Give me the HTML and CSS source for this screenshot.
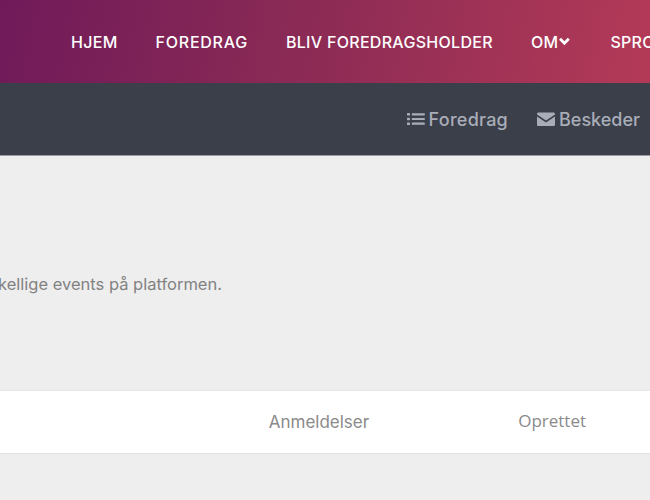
FILE: index.html
```html
<!DOCTYPE html>
<html lang="da">
<head>
<meta charset="utf-8">
<title>Foredrag</title>
<link rel="stylesheet" href="styles.css">
</head>
<body>
<header class="topnav">
  <a class="topnav-link" href="#">HJEM</a>
  <a class="topnav-link topnav-wide" href="#">FOREDRAG</a>
  <a class="topnav-link" href="#">BLIV FOREDRAGSHOLDER</a>
  <a class="topnav-link topnav-om" href="#">OM<svg class="chevron" viewBox="0 0 14 9" width="14" height="9"><path d="M2 1.800 6.400 6.200l4.400-4.400" fill="none" stroke="currentColor" stroke-width="2.800"/></svg></a>
  <a class="topnav-link" href="#">SPROG</a>
</header>
<nav class="subnav">
  <a class="subnav-link subnav-wide" href="#"><svg class="icon" viewBox="0 0 18 14" width="18" height="14"><g fill="currentColor"><rect x="0" y="1" width="3" height="2.600" rx=".6"/><rect x="0" y="5.700" width="3" height="2.600" rx=".6"/><rect x="0" y="10.400" width="3" height="2.600" rx=".6"/><rect x="4.800" y="1.200" width="13" height="2.200" rx=".5"/><rect x="4.800" y="5.900" width="13" height="2.200" rx=".5"/><rect x="4.800" y="10.600" width="13" height="2.200" rx=".5"/></g></svg>Foredrag</a>
  <a class="subnav-link" href="#"><svg class="icon" viewBox="0 0 18 14" width="18" height="14"><path fill="currentColor" d="M1.600.5h14.800c.9 0 1.600.7 1.600 1.600v.5L9 8.600 0 2.600v-.5C0 1.200.7.5 1.600.5zM0 4.500l9 6 9-6v7.900c0 .9-.7 1.600-1.600 1.600H1.600C.7 14 0 13.300 0 12.400z"/></svg>Beskeder</a>
</nav>
<main class="content">
  <p class="intro">Her kan du se forskellige events på platformen.</p>
  <div class="table-head">
    <span class="col col-reviews">Anmeldelser</span>
    <span class="col col-created">Oprettet</span>
  </div>
</main>
</body>
</html>
```
FILE: styles.css
```css
* { box-sizing: border-box; }
html, body { margin: 0; height: 100%; overflow: hidden; }
body { background: #eeeeee; font-family: "Inter", "Liberation Sans", sans-serif; }
a { text-decoration: none; color: inherit; }

.topnav {
  height: 83px;
  display: flex;
  align-items: center;
  gap: 38px;
  padding-left: 71px;
  background: linear-gradient(100deg, #701a5a 0%, #8a2a55 45%, #b33a57 100%);
  white-space: nowrap;
  overflow: hidden;
}
.topnav-link {
  color: #ffffff;
  font-family: "Inter", sans-serif;
  font-weight: 500;
  font-size: 16px;
  letter-spacing: .3px;
  flex: none;
}
.topnav-wide { letter-spacing: .75px; }
.topnav-om { display: flex; align-items: center; }
.chevron { display: block; }

.subnav {
  height: 73px;
  background: #3a3f4a;
  border-bottom: 1px solid #9a9ca2;
  display: flex;
  justify-content: flex-end;
  align-items: center;
  gap: 29px;
  padding-right: 10px;
}
.subnav-link {
  display: flex;
  align-items: center;
  gap: 4px;
  color: #a9adb8;
  font-family: "Inter", sans-serif;
  font-size: 18px;
  font-weight: 500;
}
.subnav-wide { letter-spacing: .25px; }
.icon { display: block; flex: none; }

.intro {
  margin: 0;
  height: 234px;
  display: flex;
  justify-content: flex-end;
  align-items: flex-start;
  padding: 117px 428px 0 0;
  white-space: nowrap;
  color: #828282;
  font-size: 16.500px;
  line-height: 22px;
}
.table-head {
  height: 64px;
  background: #ffffff;
  border-top: 1px solid #e6e6e6;
  border-bottom: 1px solid #e2e2e2;
  display: flex;
  justify-content: flex-end;
  align-items: center;
  padding-right: 64px;
  gap: 149px;
  color: #8a8a8a;
  font-size: 17px;
}
.col-created { font-family: "Open Sans", sans-serif; margin-bottom: 3px; }
```
